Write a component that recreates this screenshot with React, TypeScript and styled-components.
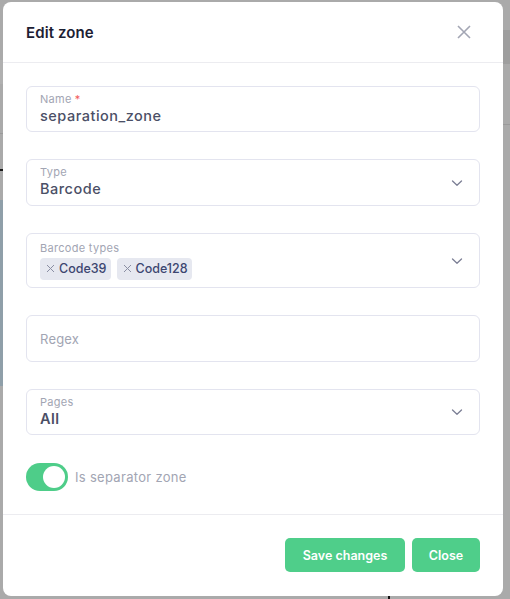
import React from "react";
import styled, { createGlobalStyle } from "styled-components";

const Global = createGlobalStyle`
  html, body { margin: 0; padding: 0; }
  body { font-family: Inter, "Noto Sans", sans-serif; background: #aaaaaa; }
  * { box-sizing: border-box; }
`;

const Backdrop = styled.div`
  position: fixed;
  inset: 0;
  background: #aaaaaa;
  padding: 2px 7px 3px 3px;
  display: flex;
  overflow: hidden;
`;

const PageBit = styled.div<{ $top: number; $h: number; $left?: number; $w?: number; $bg: string }>`
  position: absolute;
  top: ${(p) => p.$top}px;
  left: ${(p) => (p.$left ?? 0)}px;
  width: ${(p) => p.$w ?? 3}px;
  height: ${(p) => p.$h}px;
  background: ${(p) => p.$bg};
`;

const Dialog = styled.div`
  position: relative;
  z-index: 1;
  width: 500px;
  height: 594px;
  background: #ffffff;
  border-radius: 8px;
  display: flex;
  flex-direction: column;
`;

const Header = styled.div`
  height: 61px;
  border-bottom: 1px solid #ececf0;
  display: flex;
  align-items: center;
  justify-content: space-between;
  padding: 0 31px 0 23px;
`;

const Title = styled.h2`
  margin: 0;
  font-size: 15px;
  font-weight: 600;
  color: #1c2033;
  letter-spacing: 0.1px;
`;

const CloseX = styled.button`
  border: 0;
  background: none;
  padding: 0;
  width: 16px;
  height: 16px;
  display: flex;
  align-items: center;
  justify-content: center;
  cursor: pointer;
`;

const Body = styled.div`
  flex: 1;
  padding: 23px 23px 0 23px;
  display: flex;
  flex-direction: column;
  gap: 27px;
  border-bottom: 1px solid #ececf0;
`;

const Field = styled.div<{ $h: number }>`
  height: ${(p) => p.$h}px;
  border: 1px solid #e3e4ef;
  border-radius: 6px;
  padding: 0 16px 0 13px;
  display: flex;
  align-items: center;
  gap: 8px;
`;

const FieldInner = styled.div`
  flex: 1;
  display: flex;
  flex-direction: column;
  min-width: 0;
`;

const Label = styled.span`
  font-size: 11px;
  line-height: 13px;
  letter-spacing: 0.3px;
  color: #a2a5b3;
  display: flex;
  gap: 3px;
`;

const Req = styled.span`
  color: #f25b5b;
`;

const Value = styled.span<{ $bold?: boolean }>`
  font-size: 14.5px;
  line-height: 20px;
  letter-spacing: 0.5px;
  color: #4b4f66;
  font-weight: ${(p) => (p.$bold ? 600 : 500)};
`;

const Placeholder = styled.span`
  font-size: 13px;
  letter-spacing: 0.2px;
  color: #a2a5b3;
`;

const Chips = styled.div`
  display: flex;
  gap: 6px;
  margin-top: 3px;
`;

const Chip = styled.span`
  height: 22px;
  padding: 0 4px 0 6px;
  border-radius: 4px;
  background: #e6e8f0;
  display: inline-flex;
  align-items: center;
  gap: 4px;
  font-size: 12.5px;
  font-weight: 500;
  color: #3d4670;
`;

const ToggleRow = styled.div`
  display: flex;
  align-items: center;
  gap: 7px;
  font-size: 13px;
  letter-spacing: 0.3px;
  color: #a2a5b3;
  margin-top: 1px;
`;

const Toggle = styled.span`
  width: 42px;
  height: 28px;
  border-radius: 14px;
  background: #4ecd89;
  display: flex;
  align-items: center;
  justify-content: flex-end;
  padding: 0 3px;
`;

const Knob = styled.span`
  width: 22px;
  height: 22px;
  border-radius: 50%;
  background: #ffffff;
`;

const Footer = styled.div`
  height: 81px;
  display: flex;
  justify-content: flex-end;
  align-items: flex-start;
  gap: 7px;
  padding: 23px 23px 0 0;
`;

const Btn = styled.button<{ $w: number }>`
  width: ${(p) => p.$w}px;
  height: 34px;
  border: 0;
  border-radius: 5px;
  background: #4fce8a;
  color: #ffffff;
  font-family: inherit;
  font-size: 12.5px;
  font-weight: 600;
  cursor: pointer;
`;

const Chevron = () => (
  <svg width="12" height="12" viewBox="0 0 12 12" fill="none">
    <path d="M1.5 4 L6 8.3 L10.5 4" stroke="#7c7f95" strokeWidth="1.3" strokeLinecap="round" strokeLinejoin="round" />
  </svg>
);

const SmallX = () => (
  <svg width="9" height="9" viewBox="0 0 9 9" fill="none">
    <path d="M1 1 L8 8 M8 1 L1 8" stroke="#8a8ea3" strokeWidth="1" />
  </svg>
);

export default function App() {
  return (
    <>
      <Global />
      <Backdrop>
        <PageBit $top={60} $h={24} $bg="#b0b0b0" />
        <PageBit $top={133} $h={1} $bg="#9a9a9a" />
        <PageBit $top={169} $h={2} $bg="#1a1a1a" />
        <PageBit $top={200} $h={186} $bg="#8f9fa9" />
        <PageBit $top={30} $h={34} $left={503} $w={7} $bg="#9e9e9e" />
        <PageBit $top={124} $h={1} $left={503} $w={7} $bg="#9a9a9a" />
        <PageBit $top={596} $h={3} $left={388} $w={2} $bg="#111" />
        <Dialog>
          <Header>
            <Title>Edit zone</Title>
            <CloseX aria-label="close">
              <svg width="14" height="14" viewBox="0 0 14 14" fill="none">
                <path d="M1 1 L13 13 M13 1 L1 13" stroke="#a3a6b4" strokeWidth="1.6" />
              </svg>
            </CloseX>
          </Header>
          <Body>
            <Field $h={46}>
              <FieldInner>
                <Label>
                  Name <Req>*</Req>
                </Label>
                <Value>separation_zone</Value>
              </FieldInner>
            </Field>
            <Field $h={47}>
              <FieldInner>
                <Label>Type</Label>
                <Value>Barcode</Value>
              </FieldInner>
              <Chevron />
            </Field>
            <Field $h={55}>
              <FieldInner>
                <Label>Barcode types</Label>
                <Chips>
                  <Chip>
                    <SmallX />
                    Code39
                  </Chip>
                  <Chip>
                    <SmallX />
                    Code128
                  </Chip>
                </Chips>
              </FieldInner>
              <Chevron />
            </Field>
            <Field $h={47}>
              <Placeholder>Regex</Placeholder>
            </Field>
            <Field $h={46}>
              <FieldInner>
                <Label>Pages</Label>
                <Value $bold>All</Value>
              </FieldInner>
              <Chevron />
            </Field>
            <ToggleRow>
              <Toggle>
                <Knob />
              </Toggle>
              Is separator zone
            </ToggleRow>
          </Body>
          <Footer>
            <Btn $w={120}>Save changes</Btn>
            <Btn $w={68}>Close</Btn>
          </Footer>
        </Dialog>
      </Backdrop>
    </>
  );
}
